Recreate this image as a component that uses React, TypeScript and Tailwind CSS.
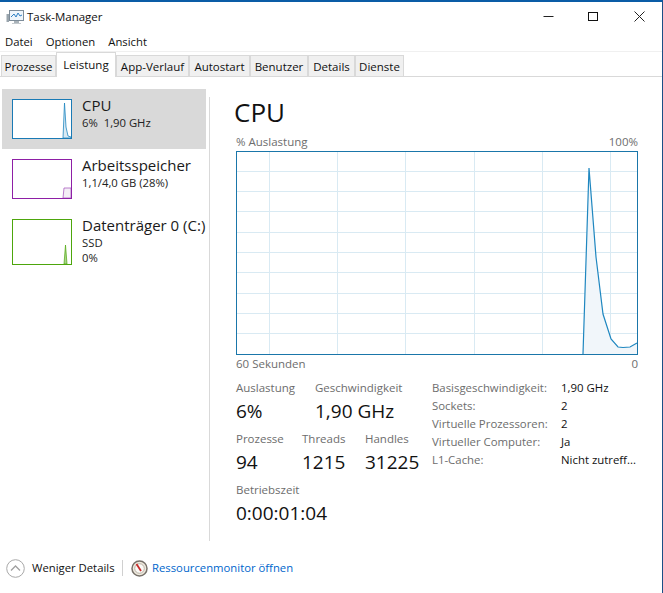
import type { ReactNode } from "react";

const font = { fontFamily: '"Open Sans", "Noto Sans", sans-serif' };

const menus = ["Datei", "Optionen", "Ansicht"];

const tabs = [
  { label: "Prozesse", width: "w-[55px]" },
  { label: "Leistung", width: "w-[60px]", active: true },
  { label: "App-Verlauf", width: "w-[73px]" },
  { label: "Autostart", width: "w-[61px]" },
  { label: "Benutzer", width: "w-[58px]" },
  { label: "Details", width: "w-[47px]" },
  { label: "Dienste", width: "w-[49px]" },
];

const specs = [
  ["Basisgeschwindigkeit:", "1,90 GHz"],
  ["Sockets:", "2"],
  ["Virtuelle Prozessoren:", "2"],
  ["Virtueller Computer:", "Ja"],
  ["L1-Cache:", "Nicht zutreff..."],
];

const hLines = [20, 40, 60, 81, 101, 121, 142, 162, 182];
const vLines = [33, 101, 169, 238, 306, 374];

function TaskIcon() {
  return (
    <svg width="18" height="16" viewBox="0 0 18 16" className="shrink-0">
      <rect x="0.5" y="5" width="2.5" height="8" fill="#9aa5ad" />
      <rect x="3.5" y="1.5" width="14" height="10" fill="#eef5fb" stroke="#7d8c99" />
      <path d="M5 8 L8 5 L10 8 L12 4 L14 7 L16 6" fill="none" stroke="#2f80c4" />
      <rect x="8" y="12" width="5" height="2" fill="#a9b2b9" />
      <rect x="6" y="14" width="9" height="1" fill="#c4cace" />
    </svg>
  );
}

function WindowButtons() {
  return (
    <div className="flex items-center gap-[30px] pr-[15px]">
      <svg width="15" height="15" viewBox="0 0 15 15">
        <path d="M2.5 7.5 H12.5" stroke="#222" />
      </svg>
      <svg width="15" height="15" viewBox="0 0 15 15" className="mr-px">
        <rect x="2.5" y="3.5" width="9" height="8" fill="none" stroke="#111" />
      </svg>
      <svg width="15" height="15" viewBox="0 0 15 15">
        <path d="M2.5 2.5 L12.5 12.5 M12.5 2.5 L2.5 12.5" stroke="#222" />
      </svg>
    </div>
  );
}

function Thumb({ color, tall, children }: { color: string; tall?: boolean; children: ReactNode }) {
  const h = tall ? 46 : 40;
  return (
    <svg width="60" height={h} viewBox={`0 0 60 ${h}`} className="block shrink-0">
      <rect x="0" y="0" width="60" height={h} fill="#fff" />
      {children}
      <rect x="0.5" y="0.5" width="59" height={h - 1} fill="none" stroke={color} />
    </svg>
  );
}

function SideItem({
  title,
  lines,
  active,
  color,
  tall,
  children,
}: {
  title: string;
  lines: string[];
  active?: boolean;
  color: string;
  tall?: boolean;
  children: ReactNode;
}) {
  return (
    <div className={`flex h-[60px] w-[204px] gap-[10px] pt-[10px] pl-[10px] ${active ? "bg-[#d9d9d9]" : ""}`}>
      <Thumb color={color} tall={tall}>
        {children}
      </Thumb>
      <div className="flex flex-col whitespace-pre">
        <span className="mt-[-4px] text-[15px] leading-[20px] text-[#1a1a1a]">{title}</span>
        {lines.map((l) => (
          <span key={l} className="text-[11.3px] leading-[15px] text-[#222]">
            {l}
          </span>
        ))}
      </div>
    </div>
  );
}

function Chart() {
  return (
    <svg width="402" height="204" viewBox="0 0 402 204" className="block">
      {hLines.map((y) => (
        <path key={y} d={`M1 ${y + 0.5} H401`} stroke="#d9eaf3" />
      ))}
      {vLines.map((x) => (
        <path key={x} d={`M${x + 0.5} 1 V203`} stroke="#d9eaf3" />
      ))}
      <path
        d="M347 203 L353 17 L360 106 L367 163 L375 188 L382 196 L387 196.5 L394 196 L401 192 V203 Z"
        fill="#f1f6fa"
      />
      <path
        d="M347 203 L353 17 L360 106 L367 163 L375 188 L382 196 L387 196.5 L394 196 L401 192"
        fill="none"
        stroke="#1f87c0"
        strokeWidth="1.2"
      />
      <rect x="0.5" y="0.5" width="401" height="203" fill="none" stroke="#1a76aa" />
    </svg>
  );
}

function Stat({ label, value, width }: { label: string; value: string; width: string }) {
  return (
    <div className={`${width} flex flex-col whitespace-nowrap`}>
      <span className="text-[11.5px] leading-[16px] text-[#6d6d6d]">{label}</span>
      <span className="mt-px text-[19px] leading-[28px] text-[#111]">{value}</span>
    </div>
  );
}

function ResmonIcon() {
  return (
    <svg width="17" height="17" viewBox="0 0 17 17" className="shrink-0">
      <circle cx="8.5" cy="8.5" r="7.5" fill="#efe9dd" stroke="#77716a" strokeWidth="1.5" />
      <circle cx="8.5" cy="8.5" r="4.8" fill="#fbfaf6" stroke="#b9b3a8" />
      <path d="M5.5 4 L10 11" stroke="#c92a2a" strokeWidth="1.8" />
    </svg>
  );
}

export default function App() {
  return (
    <div
      className="flex h-[593px] w-[663px] flex-col overflow-hidden border-t-2 border-r border-t-[#0a5ca6] border-r-[#1c4f86] bg-white"
      style={font}
    >
      <div className="flex h-[29px] shrink-0 items-center justify-between pl-[6px]">
        <div className="flex items-center gap-[3px] text-[11.5px] text-[#111]">
          <TaskIcon />
          <span>Task-Manager</span>
        </div>
        <WindowButtons />
      </div>

      <div className="flex h-[21px] shrink-0 items-center gap-[13px] border-b border-[#f0f0f0] pt-[3px] pl-[5px] text-[11.3px] text-[#111]">
        {menus.map((m) => (
          <span key={m}>{m}</span>
        ))}
      </div>

      <div className="flex h-[25px] shrink-0 items-end border-b border-[#d9d9d9] pl-px">
        {tabs.map((t) =>
          t.active ? (
            <div
              key={t.label}
              className={`${t.width} mb-[-1px] flex h-[25px] items-start justify-center border border-b-0 border-[#d9d9d9] bg-white pt-[3px] text-[11.5px] text-[#111]`}
            >
              {t.label}
            </div>
          ) : (
            <div
              key={t.label}
              className={`${t.width} flex h-[21px] items-center justify-center border-t border-r border-l border-[#d9d9d9] bg-[#f0f0f0] pt-[1px] text-[11.5px] text-[#111]`}
            >
              {t.label}
            </div>
          ),
        )}
      </div>

      <div className="flex flex-1">
        <div className="flex w-[207px] shrink-0 flex-col pt-[12px] pl-[2px]">
          <SideItem title="CPU" lines={["6%  1,90 GHz"]} active color="#1a7ab5">
            <path d="M51 39 L52.5 4 L54 28 L56 37 L59 38 V39 Z" fill="#d8e9f3" stroke="#1f87c0" strokeWidth="0.8" />
          </SideItem>
          <SideItem title="Arbeitsspeicher" lines={["1,1/4,0 GB (28%)"]} color="#8e1fa6">
            <path d="M51 39 L52 29 H59 V39 Z" fill="#f4eef6" stroke="#a95fc0" strokeWidth="0.8" />
          </SideItem>
          <SideItem title="Datenträger 0 (C:)" lines={["SSD", "0%"]} color="#4da60c" tall>
            <path d="M52 45 L53.5 26 L55 45 Z" fill="#a9d48c" stroke="#4da60c" strokeWidth="0.7" />
          </SideItem>
        </div>

        <div className="mt-[20px] ml-[2px] h-[444px] w-px shrink-0 bg-[#d9d9d9]" />

        <div className="ml-[26px] flex w-[402px] flex-col">
          <div className="mt-[13px] ml-[-2px] h-[44px] text-[26px] leading-[44px] text-[#111]">CPU</div>
          <div className="flex h-[16px] items-center justify-between text-[11.5px] text-[#6d6d6d]">
            <span>% Auslastung</span>
            <span>100%</span>
          </div>
          <div className="mt-px">
            <Chart />
          </div>
          <div className="flex h-[18px] items-center justify-between text-[11.5px] text-[#6d6d6d]">
            <span>60 Sekunden</span>
            <span>0</span>
          </div>

          <div className="mt-[7px] flex">
            <div className="flex w-[196px] flex-col">
              <div className="flex">
                <Stat label="Auslastung" value="6%" width="w-[79px]" />
                <Stat label="Geschwindigkeit" value="1,90 GHz" width="w-[100px]" />
              </div>
              <div className="mt-[6px] flex">
                <Stat label="Prozesse" value="94" width="w-[66px]" />
                <Stat label="Threads" value="1215" width="w-[63px]" />
                <Stat label="Handles" value="31225" width="w-[60px]" />
              </div>
              <div className="mt-[6px]">
                <Stat label="Betriebszeit" value="0:00:01:04" width="w-[120px]" />
              </div>
            </div>
            <div className="mt-[-1px] flex flex-col">
              {specs.map(([k, v]) => (
                <div key={k} className="flex h-[18px] items-center text-[11.4px] whitespace-nowrap">
                  <span className="w-[129px] text-[#6d6d6d]">{k}</span>
                  <span className="text-[#111]">{v}</span>
                </div>
              ))}
            </div>
          </div>
        </div>
      </div>

      <div className="flex h-[50px] shrink-0 items-center pl-[6px] text-[11.3px]">
        <svg width="19" height="19" viewBox="0 0 19 19" className="shrink-0">
          <circle cx="9.5" cy="9.5" r="8.8" fill="#fff" stroke="#a8a8a8" />
          <path d="M5 11.5 L9.5 7 L14 11.5" fill="none" stroke="#a0a0a0" strokeWidth="1.3" />
        </svg>
        <span className="ml-[7px] w-[90px] whitespace-nowrap text-[#111]">Weniger Details</span>
        <div className="h-[16px] w-px bg-[#d0d0d0]" />
        <div className="ml-[8px]">
          <ResmonIcon />
        </div>
        <span className="ml-[4px] whitespace-nowrap text-[#0066cc]">Ressourcenmonitor öffnen</span>
      </div>
    </div>
  );
}
